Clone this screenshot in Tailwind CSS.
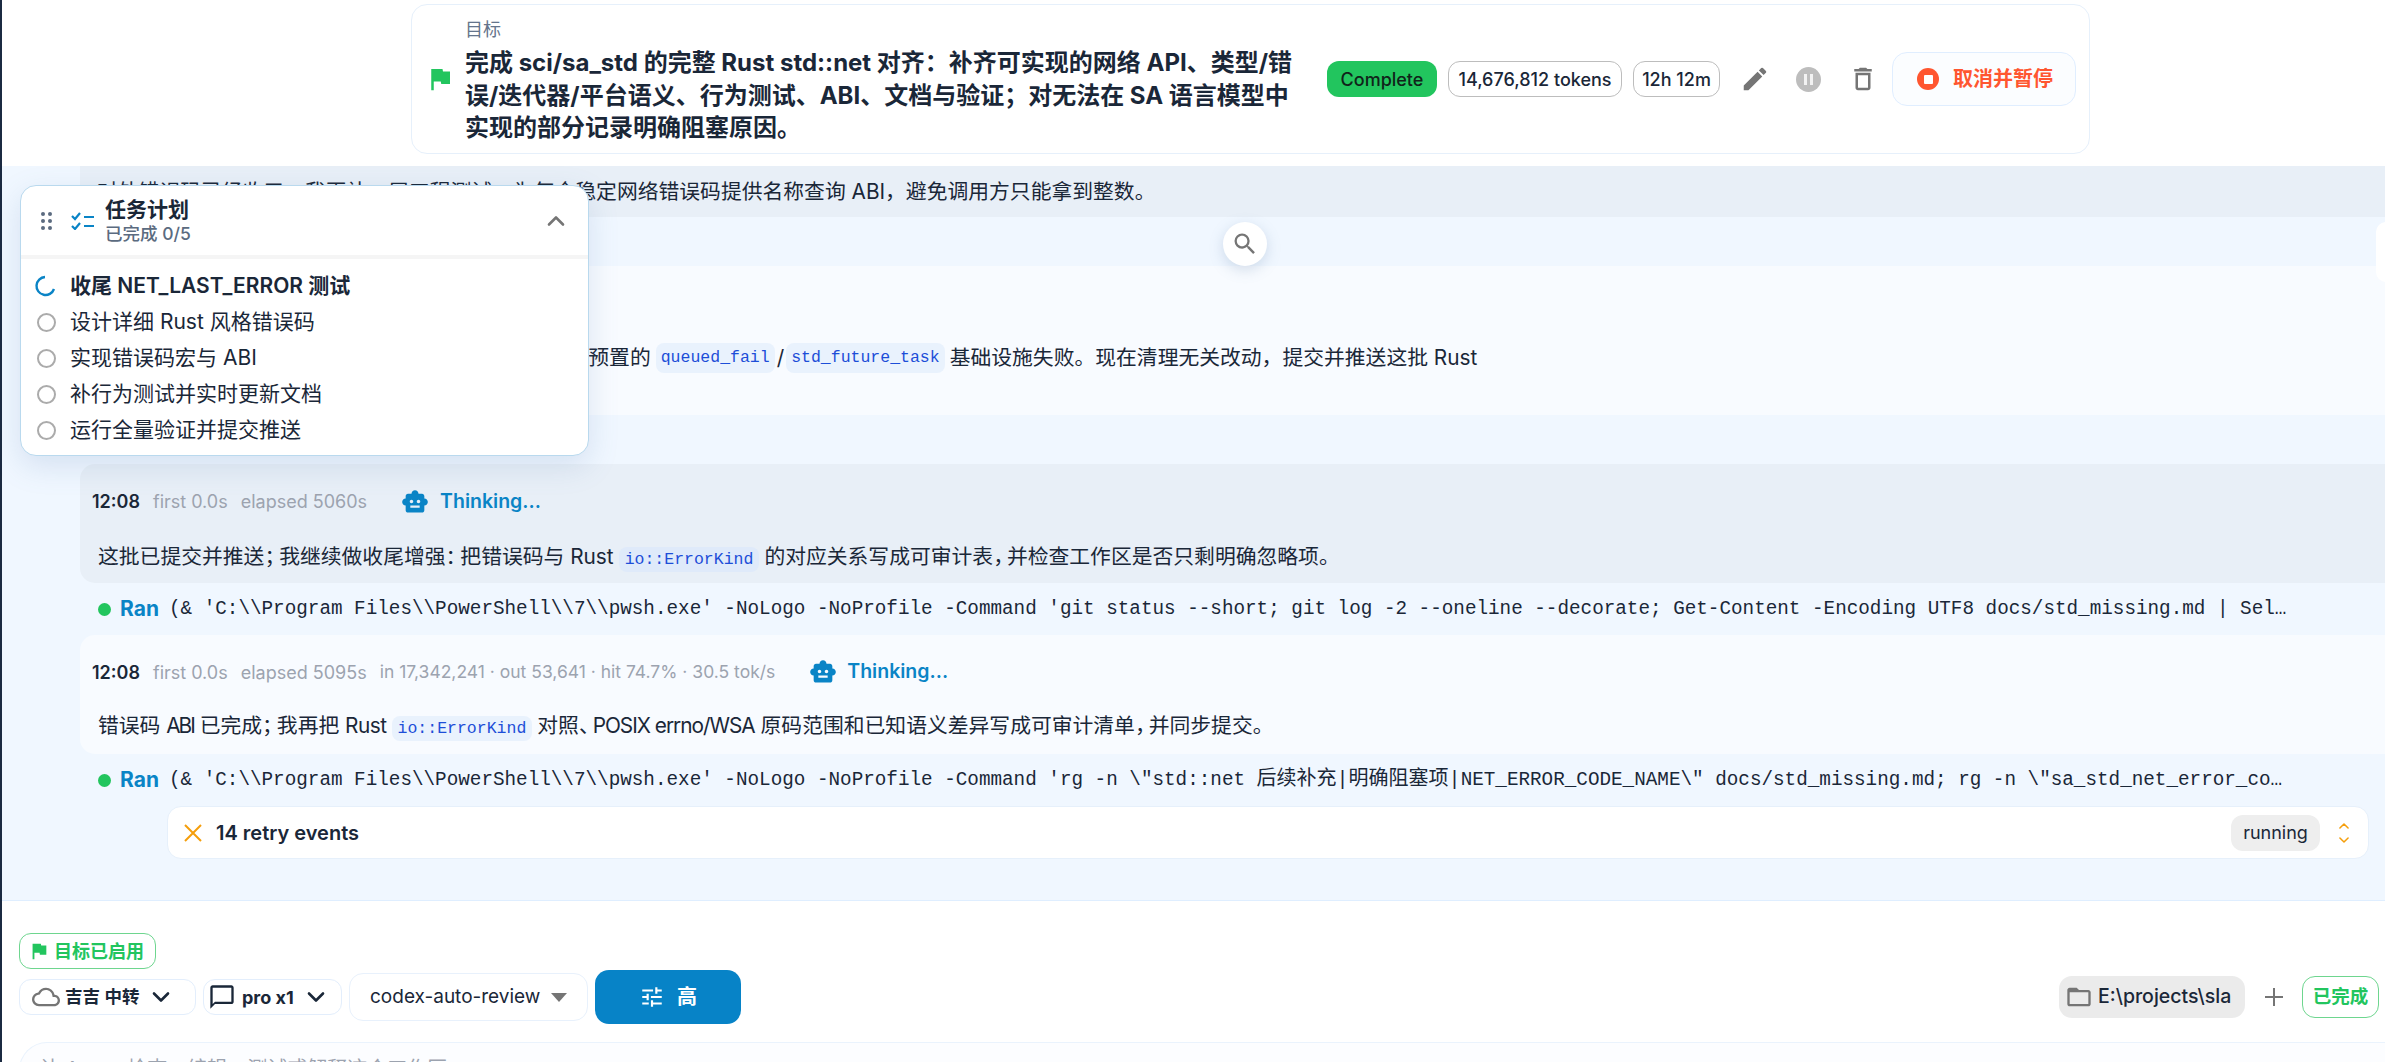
<!DOCTYPE html>
<html lang="zh-CN">
<head>
  <meta charset="UTF-8" />
  <title>Goal</title>
  <script src="https://cdn.jsdelivr.net/npm/@tailwindcss/browser@4"></script>
</head>
<body class="h-[1062px] w-[2385px] overflow-hidden bg-white font-['Inter','Noto_Sans_CJK_SC',sans-serif] text-[#1a2738]">

<svg class="hidden">
  <symbol id="flag" viewBox="0 0 24 24"><path d="M14.4 6L14 4H5v17h2v-7h5.6l.4 2h7V6z"/></symbol>
  <symbol id="bot" viewBox="0 0 24 24"><path d="M20 9V7c0-1.1-.9-2-2-2h-3c0-1.66-1.34-3-3-3S9 3.34 9 5H6c-1.1 0-2 .9-2 2v2c-1.66 0-3 1.34-3 3s1.34 3 3 3v4c0 1.1.9 2 2 2h12c1.1 0 2-.9 2-2v-4c1.66 0 3-1.34 3-3s-1.34-3-3-3zM7.5 11.5c0-.83.67-1.5 1.5-1.5s1.5.67 1.5 1.5S9.83 13 9 13s-1.5-.67-1.5-1.5zM16 17H8v-2h8v2zm-1-4c-.83 0-1.5-.67-1.5-1.5S14.17 10 15 10s1.5.67 1.5 1.5S15.83 13 15 13z"/></symbol>
  <symbol id="chev" viewBox="0 0 24 24"><path d="M5 8.5l7 7 7-7" fill="none" stroke="currentColor" stroke-width="2.6" stroke-linecap="round" stroke-linejoin="round"/></symbol>
</svg>

<div class="flex h-full flex-col border-l-2 border-[#1b2a41]">

  <!-- GOAL HEADER -->
  <header class="h-[166px] shrink-0 pl-[409px] pt-[4px]">
    <div class="flex h-[150px] w-[1679px] items-center rounded-[16px] border border-[#e6f0fb] bg-white pl-[13px] pr-[13px]">
      <svg class="h-[30px] w-[30px] shrink-0 fill-[#22c55e]"><use href="#flag"/></svg>
      <div class="ml-[10px] w-[864px] pt-[5px]">
        <div class="mb-[5px] text-[18px] leading-[24px] text-[#64748b]">目标</div>
        <div class="text-[24px] font-bold leading-[32.5px]">完成 sci/sa_std 的完整 Rust std::net 对齐：补齐可实现的网络 API、类型/错<br>误/迭代器/平台语义、行为测试、ABI、文档与验证；对无法在 SA 语言模型中<br>实现的部分记录明确阻塞原因。</div>
      </div>
      <div class="ml-auto flex items-center">
        <span class="flex h-[36px] w-[110px] items-center justify-center rounded-[12px] bg-[#22c55e] text-[18px] font-medium text-[#10231a]">Complete</span>
        <span class="ml-[11px] flex h-[36px] w-[174px] items-center justify-center rounded-[12px] border border-[#bdbdbd] text-[18px] font-medium">14,676,812 tokens</span>
        <span class="ml-[11px] flex h-[36px] w-[87px] items-center justify-center rounded-[12px] border border-[#bdbdbd] text-[18px] font-medium">12h 12m</span>
        <svg class="ml-[20px] h-[30px] w-[30px] fill-[#757575]" viewBox="0 0 24 24"><path d="M3 17.25V21h3.75L17.81 9.94l-3.75-3.75L3 17.25zM20.71 7.04a1 1 0 0 0 0-1.41l-2.34-2.34a1 1 0 0 0-1.41 0l-1.83 1.83 3.75 3.75 1.83-1.83z"/></svg>
        <span class="ml-[26px] flex h-[25px] w-[25px] items-center justify-center gap-[3px] rounded-full bg-[#bdbdbd]"><i class="h-[11px] w-[3px] bg-white/80"></i><i class="h-[11px] w-[3px] bg-white/80"></i></span>
        <svg class="ml-[27px] h-[30px] w-[30px] fill-[#757575]" viewBox="0 0 24 24"><path d="M6 19c0 1.1.9 2 2 2h8c1.1 0 2-.9 2-2V7H6v12zM8 9h8v10H8V9zm7.5-5l-1-1h-5l-1 1H5v2h14V4h-3.5z"/></svg>
        <button class="ml-[14px] flex h-[54px] w-[184px] items-center rounded-[15px] border border-[#e0eeff] bg-[#fbfdff] pl-[24px] text-[20px] font-semibold text-[#ff5630]">
          <span class="flex h-[22px] w-[22px] items-center justify-center rounded-full bg-[#ff5630]"><i class="h-[9px] w-[9px] rounded-[1px] bg-white"></i></span>
          <span class="ml-[14px]">取消并暂停</span>
        </button>
      </div>
    </div>
  </header>

  <!-- TRANSCRIPT -->
  <main class="relative h-[735px] shrink-0 border-b border-[#dfeeff] bg-[#f0f7ff]">
    <div class="ml-[78px] flex h-[51px] items-center whitespace-nowrap bg-[#e8eff7] pl-[17px] text-[20.8px]">对外错误码已经收口，我再补一层工程测试，为每个稳定网络错误码提供名称查询 ABI，避免调用方只能拿到整数。</div>
    <div class="h-[49px]"></div>
    <div class="ml-[78px] flex h-[149px] items-center whitespace-nowrap bg-[#f8fbff] pl-[30px] pt-[35px] text-[20.8px]">全量验证已经通过，余下的失败均属于旧测试框架中预置的<code class="ml-[5px] mr-[2px] rounded-[8px] bg-[#e9f2fd] px-[5px] py-[3px] font-['Liberation_Mono',monospace] text-[16.5px] text-[#1d4ed8]">queued_fail</code>/<code class="ml-[2px] mr-[5px] rounded-[8px] bg-[#e9f2fd] px-[5px] py-[3px] font-['Liberation_Mono',monospace] text-[16.5px] text-[#1d4ed8]">std_future_task</code>基础设施失败。现在清理无关改动，提交并推送这批 Rust</div>
    <div class="h-[49px]"></div>

    <div class="ml-[78px] h-[119px] rounded-l-[15px] bg-[#e8eff7] pl-[12px]">
      <div class="flex h-[75px] items-center text-[18px]">
        <span class="font-semibold">12:08</span>
        <span class="ml-[13px] text-[#9ca3af]">first 0.0s</span>
        <span class="ml-[13px] text-[#9ca3af]">elapsed 5060s</span>
        <svg class="ml-[34px] h-[28px] w-[28px] fill-[#0a84c6]"><use href="#bot"/></svg>
        <span class="ml-[11px] text-[19.5px] font-semibold text-[#0a84c6]">Thinking...</span>
      </div>
      <div class="mt-[5px] whitespace-nowrap pl-[6px] text-[20.8px] leading-[26px]">这批已提交并推送<span class="tracking-[-6px]">；</span>我继续做收尾增强<span class="tracking-[-6px]">：</span>把错误码与 Rust<code class="mx-[5px] rounded-[8px] bg-[#dfeafa] px-[6px] py-[3px] font-['Liberation_Mono',monospace] text-[16.5px] text-[#1d4ed8]">io::ErrorKind</code>的对应关系写成可审计表<span class="tracking-[-7px]">，</span>并检查工作区是否只剩明确忽略项。</div>
    </div>

    <div class="flex h-[52px] items-center whitespace-nowrap pl-[96px]">
      <span class="h-[13px] w-[13px] rounded-full bg-[#22c55e]"></span>
      <span class="ml-[9px] text-[21px] font-bold text-[#0a84c6]">Ran</span>
      <span class="ml-[10px] pt-[1px] font-['Liberation_Mono','Noto_Sans_CJK_SC',monospace] text-[19.3px]">(&amp; 'C:\\Program Files\\PowerShell\\7\\pwsh.exe' -NoLogo -NoProfile -Command 'git status --short; git log -2 --oneline --decorate; Get-Content -Encoding UTF8 docs/std_missing.md | Sel…</span>
    </div>

    <div class="ml-[78px] h-[119px] rounded-l-[15px] bg-[#f8fbff] pl-[12px]">
      <div class="flex h-[74px] items-center text-[18px]">
        <span class="font-semibold">12:08</span>
        <span class="ml-[13px] text-[#9ca3af]">first 0.0s</span>
        <span class="ml-[13px] text-[#9ca3af]">elapsed 5095s</span>
        <span class="ml-[13px] text-[17.5px] text-[#9ca3af]">in 17,342,241 · out 53,641 · hit 74.7% · 30.5 tok/s</span>
        <svg class="ml-[34px] h-[28px] w-[28px] fill-[#0a84c6]"><use href="#bot"/></svg>
        <span class="ml-[10px] text-[19.5px] font-semibold text-[#0a84c6]">Thinking...</span>
      </div>
      <div class="mt-[4px] whitespace-nowrap pl-[6px] text-[20.8px] leading-[26px]">错误码 <span class="tracking-[-2px]">ABI</span> 已完成<span class="tracking-[-6px]">；</span>我再把 <span class="tracking-[-0.5px]">Rust</span><code class="mx-[5px] rounded-[8px] bg-[#e9f2fd] px-[6px] py-[3px] font-['Liberation_Mono',monospace] text-[16.5px] text-[#1d4ed8]">io::ErrorKind</code>对照<span class="tracking-[-7px]">、</span><span class="tracking-[-1px]">POSIX errno/WSA</span> 原码范围和已知语义差异写成可审计清单<span class="tracking-[-7px]">，</span>并同步提交。</div>
    </div>

    <div class="flex h-[52px] items-center whitespace-nowrap pl-[96px]">
      <span class="h-[13px] w-[13px] rounded-full bg-[#22c55e]"></span>
      <span class="ml-[9px] text-[21px] font-bold text-[#0a84c6]">Ran</span>
      <span class="ml-[10px] font-['Liberation_Mono','Noto_Sans_CJK_SC',monospace] text-[19.3px]">(&amp; 'C:\\Program Files\\PowerShell\\7\\pwsh.exe' -NoLogo -NoProfile -Command 'rg -n \"std::net <span class="text-[20px]">后续补充|明确阻塞项|</span>NET_ERROR_CODE_NAME\" docs/std_missing.md; rg -n \"sa_std_net_error_co…</span>
    </div>

    <div class="ml-[165px] mr-[16px] flex h-[53px] items-center rounded-[14px] border border-[#e6f0fb] bg-white pl-[15px] pr-[17px]">
      <svg class="h-[20px] w-[20px] stroke-[#f59e0b]" viewBox="0 0 20 20" fill="none" stroke-width="2"><path d="M2 2l16 16M18 2L2 18"/></svg>
      <span class="ml-[13px] text-[20px] font-semibold">14 retry events</span>
      <span class="ml-auto flex h-[36px] w-[89px] items-center justify-center rounded-[12px] bg-[#eeeeee] text-[18px]">running</span>
      <span class="ml-[17px] flex flex-col text-[#f59e0b]">
        <svg class="h-[14px] w-[14px] rotate-180"><use href="#chev"/></svg>
        <svg class="h-[14px] w-[14px]"><use href="#chev"/></svg>
      </span>
    </div>

    <!-- floating: search and right edge tab -->
    <button class="absolute left-[1221px] top-[56px] flex h-[44px] w-[44px] items-center justify-center rounded-full bg-white shadow-[0_4px_14px_rgba(100,130,170,0.25)]">
      <svg class="h-[28px] w-[28px] fill-[#757575]" viewBox="0 0 24 24"><path d="M15.5 14h-.79l-.28-.27A6.47 6.47 0 0 0 16 9.5 6.5 6.5 0 1 0 9.5 16c1.61 0 3.09-.59 4.23-1.57l.27.28v.79l5 4.99L20.49 19l-4.99-5zm-6 0C7.01 14 5 11.99 5 9.5S7.01 5 9.5 5 14 7.01 14 9.5 11.99 14 9.5 14z"/></svg>
    </button>
    <div class="absolute left-[2374px] top-[56px] h-[60px] w-[20px] rounded-[10px] bg-white"></div>

    <!-- floating: task plan -->
    <section class="absolute left-[18px] top-[19px] h-[271px] w-[569px] rounded-[16px] border border-[#b9d9ee] bg-white shadow-[0_10px_30px_rgba(90,130,180,0.18)]">
      <div class="flex h-[73px] items-center border-b-[4px] border-[#f5f5f5] pl-[20px] pr-[20px]">
        <svg class="h-[18px] w-[11px] fill-[#5b6b80]" viewBox="0 0 11 18"><circle cx="2" cy="2" r="2"/><circle cx="9" cy="2" r="2"/><circle cx="2" cy="9" r="2"/><circle cx="9" cy="9" r="2"/><circle cx="2" cy="16" r="2"/><circle cx="9" cy="16" r="2"/></svg>
        <svg class="ml-[19px] h-[18px] w-[24px] fill-none stroke-[#0a84c6]" viewBox="0 0 24 18" stroke-width="2.2"><path d="M1 4l3 3 5-6M1 14l3 3 5-6"/><path d="M13 5h10M13 14h10"/></svg>
        <div class="ml-[10px]">
          <div class="text-[21px] font-bold leading-[26px]">任务计划</div>
          <div class="text-[17.5px] font-medium leading-[22px] text-[#5b6b80]">已完成 0/5</div>
        </div>
        <svg class="ml-auto h-[24px] w-[24px] rotate-180 text-[#757575]"><use href="#chev"/></svg>
      </div>
      <ul class="pt-[9px] text-[21px] leading-[36px]">
        <li class="flex items-center pl-[13px] font-semibold">
          <svg class="h-[22px] w-[22px] fill-none stroke-[#0a84c6]" viewBox="0 0 22 22" stroke-width="2.4"><path d="M11 2A9 9 0 1 0 20 14"/></svg>
          <span class="ml-[14px]">收尾 NET_LAST_ERROR 测试</span>
        </li>
        <li class="flex items-center pl-[16px]"><span class="h-[19px] w-[19px] rounded-full border-2 border-[#ababab]"></span><span class="ml-[14px]">设计详细 Rust 风格错误码</span></li>
        <li class="flex items-center pl-[16px]"><span class="h-[19px] w-[19px] rounded-full border-2 border-[#ababab]"></span><span class="ml-[14px]">实现错误码宏与 ABI</span></li>
        <li class="flex items-center pl-[16px]"><span class="h-[19px] w-[19px] rounded-full border-2 border-[#ababab]"></span><span class="ml-[14px]">补行为测试并实时更新文档</span></li>
        <li class="flex items-center pl-[16px]"><span class="h-[19px] w-[19px] rounded-full border-2 border-[#ababab]"></span><span class="ml-[14px]">运行全量验证并提交推送</span></li>
      </ul>
    </section>
  </main>

  <!-- COMPOSER -->
  <footer class="min-h-0 flex-1 overflow-hidden pl-[17px] pt-[32px]">
    <div class="flex h-[36px] w-[137px] items-center rounded-[12px] border border-[#6ed68f] pl-[8px] text-[18px] font-bold text-[#22c55e]">
      <svg class="h-[22px] w-[22px] shrink-0 fill-[#22c55e]"><use href="#flag"/></svg>
      <span class="ml-[4px]">目标已启用</span>
    </div>
    <div class="flex h-[56px] items-center">
      <div class="flex h-[36px] w-[177px] items-center rounded-[12px] border border-[#e3eefc] pl-[12px] text-[17.5px] font-semibold">
        <svg class="h-[28px] w-[28px] fill-[#757575]" viewBox="0 0 24 24"><path d="M19.35 10.04A7.49 7.49 0 0 0 12 4C9.11 4 6.6 5.64 5.35 8.04A5.994 5.994 0 0 0 0 14c0 3.31 2.69 6 6 6h13c2.76 0 5-2.24 5-5 0-2.64-2.05-4.78-4.65-4.96zM19 18H6c-2.21 0-4-1.79-4-4 0-2.05 1.53-3.76 3.56-3.97l1.07-.11.5-.95A5.469 5.469 0 0 1 12 6c2.62 0 4.88 1.86 5.39 4.43l.3 1.5 1.53.11A2.98 2.98 0 0 1 22 15c0 1.65-1.35 3-3 3z"/></svg>
        <span class="ml-[5px]">吉吉 中转</span>
        <svg class="ml-[10px] h-[24px] w-[24px]"><use href="#chev"/></svg>
      </div>
      <div class="ml-[7px] flex h-[36px] w-[139px] items-center rounded-[12px] border border-[#e3eefc] pl-[4px] text-[18px] font-bold">
        <svg class="h-[28px] w-[28px] fill-[#1a2738]" viewBox="0 0 24 24"><path d="M20 2H4c-1.1 0-2 .9-2 2v18l4-4h14c1.1 0 2-.9 2-2V4c0-1.1-.9-2-2-2zm0 14H6l-2 2V4h16v12z"/></svg>
        <span class="ml-[6px]">pro x1</span>
        <svg class="ml-[10px] h-[24px] w-[24px]"><use href="#chev"/></svg>
      </div>
      <div class="ml-[7px] flex h-[48px] w-[239px] items-center rounded-[14px] border border-[#e8f1fc] pl-[20px] text-[19px]">
        codex-auto-review
        <span class="ml-[11px] h-0 w-0 border-x-[8px] border-t-[9px] border-x-transparent border-t-[#757575]"></span>
      </div>
      <button class="ml-[7px] flex h-[54px] w-[146px] items-center rounded-[14px] bg-[#0783c7] pl-[44px] text-[20px] font-semibold text-white">
        <svg class="h-[26px] w-[26px] fill-white" viewBox="0 0 24 24"><path d="M3 17v2h6v-2H3zM3 5v2h10V5H3zm10 16v-2h8v-2h-8v-2h-2v6h2zM7 9v2H3v2h4v2h2V9H7zm14 4v-2H11v2h10zm-6-4h2V7h4V5h-4V3h-2v6z"/></svg>
        <span class="ml-[12px]">高</span>
      </button>
      <div class="ml-auto flex h-[42px] w-[186px] items-center rounded-[13px] bg-[#ebebeb] pl-[6px] text-[19.5px] font-medium">
        <svg class="h-[28px] w-[28px] fill-[#757575]" viewBox="0 0 24 24"><path d="M20 6h-8l-2-2H4c-1.1 0-2 .9-2 2v12c0 1.1.9 2 2 2h16c1.1 0 2-.9 2-2V8c0-1.1-.9-2-2-2zm0 12H4V8h16v10z"/></svg>
        <span class="ml-[5px]">E:\projects\sla</span>
      </div>
      <svg class="ml-[20px] h-[18px] w-[18px] stroke-[#757575]" viewBox="0 0 18 18" stroke-width="2"><path d="M9 0v18M0 9h18"/></svg>
      <span class="ml-[19px] mr-[6px] flex h-[42px] w-[77px] items-center justify-center rounded-[13px] border border-[#6ed68f] text-[18.5px] font-bold text-[#22c55e]">已完成</span>
    </div>
    <div class="mt-[17px] h-[60px] rounded-tl-[28px] border border-r-0 border-[#eaf3fd] bg-[#fcfdff] pl-[20px] pt-[12px] text-[20px] leading-[28px] text-[#9ca3af]">让 Agent 检查、编辑、测试或解释这个工作区</div>
  </footer>
</div>
</body>
</html>
